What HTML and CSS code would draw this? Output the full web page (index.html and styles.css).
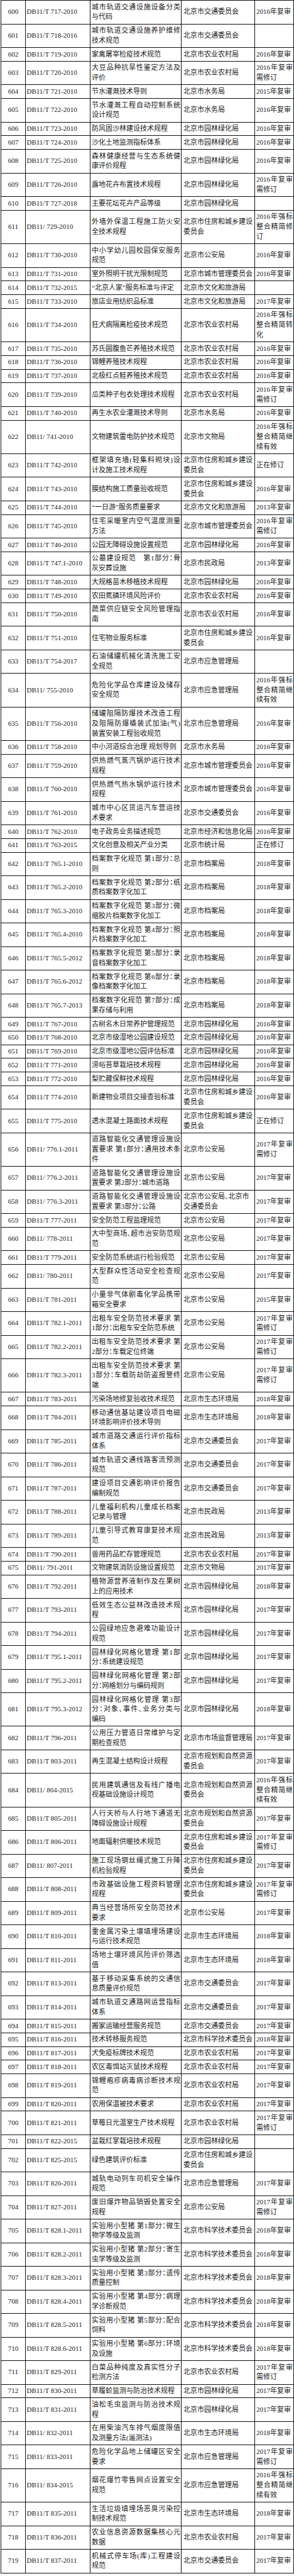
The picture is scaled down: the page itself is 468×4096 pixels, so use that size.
FILE: index.html
```html
<!DOCTYPE html>
<html lang="zh-CN">
<head>
<meta charset="utf-8">
<title>北京市地方标准复审情况表</title>
<link rel="stylesheet" href="styles.css">
</head>
<body>
<table class="std">
<colgroup><col class="c-no"><col class="c-code"><col class="c-name"><col class="c-dept"><col class="c-st"></colgroup>
<tbody>
<tr><td class="no">600</td><td class="code">DB11/T 717-2010</td><td class="name"><span class="j">城市轨道交通设施设备分类</span>与代码</td><td class="dept">北京市交通委员会</td><td class="st">2016年复审</td></tr>
<tr><td class="no">601</td><td class="code">DB11/T 718-2016</td><td class="name"><span class="j">城市轨道交通设施养护维修</span>技术规范</td><td class="dept">北京市交通委员会</td><td class="st"></td></tr>
<tr><td class="no">602</td><td class="code">DB11/T 719-2010</td><td class="name">家禽屠宰检疫技术规范</td><td class="dept">北京市农业农村局</td><td class="st">2016年复审</td></tr>
<tr><td class="no">603</td><td class="code">DB11/T 720-2010</td><td class="name"><span class="j">大豆品种抗旱性鉴定方法及</span>评价</td><td class="dept">北京市农业农村局</td><td class="st">2016年复审需修订</td></tr>
<tr><td class="no">604</td><td class="code">DB11/T 721-2010</td><td class="name">节水灌溉技术导则</td><td class="dept">北京市水务局</td><td class="st">2015年复审</td></tr>
<tr><td class="no">605</td><td class="code">DB11/T 722-2010</td><td class="name"><span class="j">节水灌溉工程自动控制系统</span>设计规范</td><td class="dept">北京市水务局</td><td class="st">2016年复审</td></tr>
<tr><td class="no">606</td><td class="code">DB11/T 723-2010</td><td class="name">防风固沙林建设技术规程</td><td class="dept">北京市园林绿化局</td><td class="st">2016年复审</td></tr>
<tr><td class="no">607</td><td class="code">DB11/T 724-2010</td><td class="name">沙化土地监测指标体系</td><td class="dept">北京市园林绿化局</td><td class="st">2016年复审</td></tr>
<tr><td class="no">608</td><td class="code">DB11/T 725-2010</td><td class="name"><span class="j">森林健康经营与生态系统健</span>康评价规程</td><td class="dept">北京市园林绿化局</td><td class="st">2016年复审</td></tr>
<tr><td class="no">609</td><td class="code">DB11/T 726-2010</td><td class="name">露地花卉布置技术规程</td><td class="dept">北京市园林绿化局</td><td class="st">2016年复审需修订</td></tr>
<tr><td class="no">610</td><td class="code">DB11/T 727-2018</td><td class="name">主要花坛花卉产品等级</td><td class="dept">北京市园林绿化局</td><td class="st"></td></tr>
<tr><td class="no">611</td><td class="code">DB11/ 729-2010</td><td class="name"><span class="j">外墙外保温工程施工防火安</span>全技术规程</td><td class="dept">北京市住房和城乡建设委员会</td><td class="st">2016年强标整合精简修订</td></tr>
<tr><td class="no">612</td><td class="code">DB11/T 730-2010</td><td class="name"><span class="j">中小学幼儿园校园保安服务</span>规范</td><td class="dept">北京市公安局</td><td class="st">2016年复审</td></tr>
<tr><td class="no">613</td><td class="code">DB11/T 731-2010</td><td class="name">室外照明干扰光限制规范</td><td class="dept">北京市城市管理委员会</td><td class="st">2016年复审</td></tr>
<tr><td class="no">614</td><td class="code">DB11/T 732-2015</td><td class="name">“北京人家”服务标准与评定</td><td class="dept">北京市文化和旅游局</td><td class="st"></td></tr>
<tr><td class="no">615</td><td class="code">DB11/T 733-2010</td><td class="name">旅店业用纺织品标准</td><td class="dept">北京市文化和旅游局</td><td class="st">2017年复审</td></tr>
<tr><td class="no">616</td><td class="code">DB11/T 734-2010</td><td class="name">狂犬病隔离检疫技术规范</td><td class="dept">北京市农业农村局</td><td class="st">2016年强标整合精简转化</td></tr>
<tr><td class="no">617</td><td class="code">DB11/T 735-2010</td><td class="name">苏氏圆腹鱼芒养殖技术规范</td><td class="dept">北京市农业农村局</td><td class="st">2016年复审</td></tr>
<tr><td class="no">618</td><td class="code">DB11/T 736-2010</td><td class="name">锦鲤养殖技术规程</td><td class="dept">北京市农业农村局</td><td class="st">2016年复审</td></tr>
<tr><td class="no">619</td><td class="code">DB11/T 737-2010</td><td class="name">北极红点鲑养殖技术规范</td><td class="dept">北京市农业农村局</td><td class="st">2016年复审</td></tr>
<tr><td class="no">620</td><td class="code">DB11/T 739-2010</td><td class="name">瓜类种子包衣处理技术规程</td><td class="dept">北京市农业农村局</td><td class="st">2016年复审需修订</td></tr>
<tr><td class="no">621</td><td class="code">DB11/T 740-2010</td><td class="name">再生水农业灌溉技术导则</td><td class="dept">北京市水务局</td><td class="st">2016年复审</td></tr>
<tr><td class="no">622</td><td class="code">DB11/ 741-2010</td><td class="name">文物建筑雷电防护技术规范</td><td class="dept">北京市文物局</td><td class="st">2016年强标整合精简继续有效</td></tr>
<tr><td class="no">623</td><td class="code">DB11/T 742-2010</td><td class="name"><span class="j">框架填充墙(轻集料砌块)设</span>计及施工技术规程</td><td class="dept">北京市住房和城乡建设委员会</td><td class="st">正在修订</td></tr>
<tr><td class="no">624</td><td class="code">DB11/T 743-2010</td><td class="name">膜结构施工质量验收规范</td><td class="dept">北京市住房和城乡建设委员会</td><td class="st">2016年复审</td></tr>
<tr><td class="no">625</td><td class="code">DB11/T 744-2010</td><td class="name">“一日游”服务质量要求</td><td class="dept">北京市文化和旅游局</td><td class="st">2013年复审</td></tr>
<tr><td class="no">626</td><td class="code">DB11/T 745-2010</td><td class="name"><span class="j">住宅采暖室内空气温度测量</span>方法</td><td class="dept">北京市城市管理委员会</td><td class="st">2016年复审需修订</td></tr>
<tr><td class="no">627</td><td class="code">DB11/T 746-2010</td><td class="name">公园无障碍设施设置规范</td><td class="dept">北京市园林绿化局</td><td class="st">2016年复审</td></tr>
<tr><td class="no">628</td><td class="code">DB11/T 747.1-2010</td><td class="name"><span class="j">公墓建设规范　第1部分：骨</span>灰安葬设施</td><td class="dept">北京市民政局</td><td class="st">2013年复审</td></tr>
<tr><td class="no">629</td><td class="code">DB11/T 748-2010</td><td class="name">大规格苗木移植技术规程</td><td class="dept">北京市园林绿化局</td><td class="st">2016年复审</td></tr>
<tr><td class="no">630</td><td class="code">DB11/T 749-2010</td><td class="name">农田氮磷环境风险评价</td><td class="dept">北京市农业农村局</td><td class="st">2016年复审</td></tr>
<tr><td class="no">631</td><td class="code">DB11/T 750-2010</td><td class="name"><span class="j">蔬菜供应链安全风险管理指</span>南</td><td class="dept">北京市农业农村局</td><td class="st">2016年复审</td></tr>
<tr><td class="no">632</td><td class="code">DB11/T 751-2010</td><td class="name">住宅物业服务标准</td><td class="dept">北京市住房和城乡建设委员会</td><td class="st">2016年复审</td></tr>
<tr><td class="no">633</td><td class="code">DB11/T 754-2017</td><td class="name"><span class="j">石油储罐机械化清洗施工安</span>全规范</td><td class="dept">北京市应急管理局</td><td class="st"></td></tr>
<tr><td class="no">634</td><td class="code">DB11/ 755-2010</td><td class="name"><span class="j">危险化学品仓库建设及储存</span>安全规范</td><td class="dept">北京市应急管理局</td><td class="st">2016年强标整合精简继续有效</td></tr>
<tr><td class="no">635</td><td class="code">DB11/T 756-2010</td><td class="name"><span class="j">储罐阻隔防爆技术改造工程</span><span class="j">及阻隔防爆橇装式加油(气)</span>装置安装工程验收规范</td><td class="dept">北京市应急管理局</td><td class="st">2016年复审</td></tr>
<tr><td class="no">636</td><td class="code">DB11/T 758-2010</td><td class="name">中小河道综合治理 规划导则</td><td class="dept">北京市水务局</td><td class="st">2016年复审</td></tr>
<tr><td class="no">637</td><td class="code">DB11/T 759-2010</td><td class="name"><span class="j">供热燃气蒸汽锅炉运行技术</span>规程</td><td class="dept">北京市城市管理委员会</td><td class="st">2016年复审</td></tr>
<tr><td class="no">638</td><td class="code">DB11/T 760-2010</td><td class="name"><span class="j">供热燃气热水锅炉运行技术</span>规程</td><td class="dept">北京市城市管理委员会</td><td class="st">2016年复审</td></tr>
<tr><td class="no">639</td><td class="code">DB11/T 761-2010</td><td class="name"><span class="j">城市中心区货运汽车营运技</span>术要求</td><td class="dept">北京市交通委员会</td><td class="st">2016年复审</td></tr>
<tr><td class="no">640</td><td class="code">DB11/T 762-2010</td><td class="name">电子政务业务描述规范</td><td class="dept">北京市经济和信息化局</td><td class="st">2016年复审</td></tr>
<tr><td class="no">641</td><td class="code">DB11/T 763-2015</td><td class="name">文化创意及相关产业分类</td><td class="dept">北京市统计局</td><td class="st">正在修订</td></tr>
<tr><td class="no">642</td><td class="code">DB11/T 765.1-2010</td><td class="name"><span class="j">档案数字化规范 第1部分：总</span>则</td><td class="dept">北京市档案局</td><td class="st">2018年复审</td></tr>
<tr><td class="no">643</td><td class="code">DB11/T 765.2-2010</td><td class="name"><span class="j">档案数字化规范 第2部分：纸</span>质档案数字化加工</td><td class="dept">北京市档案局</td><td class="st">2018年复审</td></tr>
<tr><td class="no">644</td><td class="code">DB11/T 765.3-2010</td><td class="name"><span class="j">档案数字化规范 第3部分：微</span>缩胶片档案数字化加工</td><td class="dept">北京市档案局</td><td class="st">2018年复审</td></tr>
<tr><td class="no">645</td><td class="code">DB11/T 765.4-2010</td><td class="name"><span class="j">档案数字化规范 第4部分：照</span>片档案数字化加工</td><td class="dept">北京市档案局</td><td class="st">2018年复审</td></tr>
<tr><td class="no">646</td><td class="code">DB11/T 765.5-2012</td><td class="name"><span class="j">档案数字化规范 第5部分：录</span>音档案数字化加工</td><td class="dept">北京市档案局</td><td class="st">2018年复审</td></tr>
<tr><td class="no">647</td><td class="code">DB11/T 765.6-2012</td><td class="name"><span class="j">档案数字化规范 第6部分：录</span>像档案数字化加工</td><td class="dept">北京市档案局</td><td class="st">2018年复审</td></tr>
<tr><td class="no">648</td><td class="code">DB11/T 765.7-2013</td><td class="name"><span class="j">档案数字化规范 第7部分：成</span>果存储与利用</td><td class="dept">北京市档案局</td><td class="st">2018年复审</td></tr>
<tr><td class="no">649</td><td class="code">DB11/T 767-2010</td><td class="name">古树名木日常养护管理规范</td><td class="dept">北京市园林绿化局</td><td class="st">2016年复审</td></tr>
<tr><td class="no">650</td><td class="code">DB11/T 768-2010</td><td class="name">北京市级湿地公园建设规范</td><td class="dept">北京市园林绿化局</td><td class="st">2016年复审</td></tr>
<tr><td class="no">651</td><td class="code">DB11/T 769-2010</td><td class="name">北京市级湿地公园评估标准</td><td class="dept">北京市园林绿化局</td><td class="st">2016年复审</td></tr>
<tr><td class="no">652</td><td class="code">DB11/T 771-2010</td><td class="name">涝峪苔草栽培技术规程</td><td class="dept">北京市园林绿化局</td><td class="st">2016年复审</td></tr>
<tr><td class="no">653</td><td class="code">DB11/T 772-2010</td><td class="name">梨贮藏保鲜技术规程</td><td class="dept">北京市园林绿化局</td><td class="st">2016年复审</td></tr>
<tr><td class="no">654</td><td class="code">DB11/T 774-2010</td><td class="name">新建物业项目交接查验标准</td><td class="dept">北京市住房和城乡建设委员会</td><td class="st">2016年复审</td></tr>
<tr><td class="no">655</td><td class="code">DB11/T 775-2010</td><td class="name">透水混凝土路面技术规程</td><td class="dept">北京市住房和城乡建设委员会</td><td class="st">正在修订</td></tr>
<tr><td class="no">656</td><td class="code">DB11/ 776.1-2011</td><td class="name"><span class="j">道路智能化交通管理设施设</span><span class="j">置要求 第1部分：通用技术条</span>件</td><td class="dept">北京市公安局</td><td class="st">2017年复审需修订</td></tr>
<tr><td class="no">657</td><td class="code">DB11/ 776.2-2011</td><td class="name"><span class="j">道路智能化交通管理设施设</span>置要求 第2部分：城市道路</td><td class="dept">北京市公安局</td><td class="st">2017年复审</td></tr>
<tr><td class="no">658</td><td class="code">DB11/ 776.3-2011</td><td class="name"><span class="j">道路智能化交通管理设施设</span>置要求 第3部分：公路</td><td class="dept">北京市公安局、北京市交通委员会</td><td class="st">2017年复审</td></tr>
<tr><td class="no">659</td><td class="code">DB11/T 777-2011</td><td class="name">安全防范工程监理规范</td><td class="dept">北京市公安局</td><td class="st">2017年复审</td></tr>
<tr><td class="no">660</td><td class="code">DB11/ 778-2011</td><td class="name"><span class="j">大中型商场、超市治安防范规</span>范</td><td class="dept">北京市公安局</td><td class="st">2017年复审</td></tr>
<tr><td class="no">661</td><td class="code">DB11/T 779-2011</td><td class="name">安全防范系统运行检验规范</td><td class="dept">北京市公安局</td><td class="st">2017年复审</td></tr>
<tr><td class="no">662</td><td class="code">DB11/ 780-2011</td><td class="name"><span class="j">大型群众性活动安全检查规</span>范</td><td class="dept">北京市公安局</td><td class="st">2017年复审</td></tr>
<tr><td class="no">663</td><td class="code">DB11/T 781-2011</td><td class="name"><span class="j">小量非气体剧毒化学品携带</span>箱安全要求</td><td class="dept">北京市公安局</td><td class="st">2015年复审</td></tr>
<tr><td class="no">664</td><td class="code">DB11/T 782.1-2011</td><td class="name"><span class="j">出租车安全防范技术要求 第</span>1部分：出租车安全防范系统</td><td class="dept">北京市公安局</td><td class="st">2017年复审需修订</td></tr>
<tr><td class="no">665</td><td class="code">DB11/T 782.2-2011</td><td class="name"><span class="j">出租车安全防范技术要求 第</span>2部分：车载定位终端</td><td class="dept">北京市公安局</td><td class="st">2017年复审需修订</td></tr>
<tr><td class="no">666</td><td class="code">DB11/T 782.3-2011</td><td class="name"><span class="j">出租车安全防范技术要求 第</span><span class="j">3部分：车载防劫防盗报警终</span>端</td><td class="dept">北京市公安局</td><td class="st">2017年复审需修订</td></tr>
<tr><td class="no">667</td><td class="code">DB11/T 783-2011</td><td class="name">污染场地修复验收技术规范</td><td class="dept">北京市生态环境局</td><td class="st">2018年复审</td></tr>
<tr><td class="no">668</td><td class="code">DB11/T 784-2011</td><td class="name"><span class="j">移动通信基站建设项目电磁</span>环境影响评价技术导则</td><td class="dept">北京市生态环境局</td><td class="st">2018年复审</td></tr>
<tr><td class="no">669</td><td class="code">DB11/T 785-2011</td><td class="name"><span class="j">城市道路交通运行评价指标</span>体系</td><td class="dept">北京市交通委员会</td><td class="st">2017年复审</td></tr>
<tr><td class="no">670</td><td class="code">DB11/T 786-2011</td><td class="name"><span class="j">城市轨道交通线路客流预测</span>规范</td><td class="dept">北京市交通委员会</td><td class="st">2017年复审</td></tr>
<tr><td class="no">671</td><td class="code">DB11/T 787-2011</td><td class="name"><span class="j">建设项目交通影响评价报告</span>编制规范</td><td class="dept">北京市交通委员会</td><td class="st">2017年复审</td></tr>
<tr><td class="no">672</td><td class="code">DB11/T 788-2011</td><td class="name"><span class="j">儿童福利机构儿童成长档案</span>记录与管理</td><td class="dept">北京市民政局</td><td class="st">2013年复审</td></tr>
<tr><td class="no">673</td><td class="code">DB11/T 789-2011</td><td class="name"><span class="j">儿童引导式教育康复技术规</span>范</td><td class="dept">北京市民政局</td><td class="st">2013年复审</td></tr>
<tr><td class="no">674</td><td class="code">DB11/T 790-2011</td><td class="name">兽用药品贮存管理规范</td><td class="dept">北京市农业农村局</td><td class="st">2017年复审</td></tr>
<tr><td class="no">675</td><td class="code">DB11/ 791-2011</td><td class="name">文物建筑消防设施设置规范</td><td class="dept">北京市文物局</td><td class="st">2017年复审</td></tr>
<tr><td class="no">676</td><td class="code">DB11/T 792-2011</td><td class="name"><span class="j">植物源营养液制作及在果树</span>上的应用技术</td><td class="dept">北京市园林绿化局</td><td class="st">2018年复审</td></tr>
<tr><td class="no">677</td><td class="code">DB11/T 793-2011</td><td class="name"><span class="j">低效生态公益林改造技术规</span>程</td><td class="dept">北京市园林绿化局</td><td class="st">2017年复审</td></tr>
<tr><td class="no">678</td><td class="code">DB11/T 794-2011</td><td class="name"><span class="j">公园绿地应急避难功能设计</span>规范</td><td class="dept">北京市园林绿化局</td><td class="st">2017年复审</td></tr>
<tr><td class="no">679</td><td class="code">DB11/T 795.1-2011</td><td class="name"><span class="j">园林绿化网格化管理 第1部</span>分：系统建设规范</td><td class="dept">北京市园林绿化局</td><td class="st">2017年复审</td></tr>
<tr><td class="no">680</td><td class="code">DB11/T 795.2-2011</td><td class="name"><span class="j">园林绿化网格化管理 第2部</span>分：网格划分与编码规则</td><td class="dept">北京市园林绿化局</td><td class="st">2017年复审</td></tr>
<tr><td class="no">681</td><td class="code">DB11/T 795.3-2012</td><td class="name"><span class="j">园林绿化网格化管理 第3部</span><span class="j">分：对象、事件、业务分类与</span>编码</td><td class="dept">北京市园林绿化局</td><td class="st">2018年复审</td></tr>
<tr><td class="no">682</td><td class="code">DB11/T 796-2011</td><td class="name"><span class="j">公用压力管道日常维护与定</span>期检查规范</td><td class="dept">北京市市场监督管理局</td><td class="st">2017年复审</td></tr>
<tr><td class="no">683</td><td class="code">DB11/T 803-2011</td><td class="name">再生混凝土结构设计规程</td><td class="dept">北京市规划和自然资源委员会</td><td class="st">2017年复审</td></tr>
<tr><td class="no">684</td><td class="code">DB11/ 804-2015</td><td class="name"><span class="j">民用建筑通信及有线广播电</span>视基础设施设计规范</td><td class="dept">北京市规划和自然资源委员会</td><td class="st">2016年强标整合精简继续有效</td></tr>
<tr><td class="no">685</td><td class="code">DB11/T 805-2011</td><td class="name"><span class="j">人行天桥与人行地下通道无</span>障碍设施设计规程</td><td class="dept">北京市规划和自然资源委员会</td><td class="st">2017年复审</td></tr>
<tr><td class="no">686</td><td class="code">DB11/T 806-2011</td><td class="name">地面辐射供暖技术规范</td><td class="dept">北京市住房和城乡建设委员会</td><td class="st">2017年复审需修订</td></tr>
<tr><td class="no">687</td><td class="code">DB11/ 807-2011</td><td class="name"><span class="j">施工现场钢丝绳式施工升降</span>机检验规程</td><td class="dept">北京市住房和城乡建设委员会</td><td class="st">2017年复审</td></tr>
<tr><td class="no">688</td><td class="code">DB11/T 808-2011</td><td class="name"><span class="j">市政基础设施工程资料管理</span>规程</td><td class="dept">北京市住房和城乡建设委员会</td><td class="st">2017年复审需修订</td></tr>
<tr><td class="no">689</td><td class="code">DB11/T 809-2011</td><td class="name"><span class="j">典当经营场所安全防范技术</span>要求</td><td class="dept">北京市公安局</td><td class="st">2017年复审</td></tr>
<tr><td class="no">690</td><td class="code">DB11/T 810-2011</td><td class="name"><span class="j">重金属污染土壤填埋场建设</span>与运行技术规范</td><td class="dept">北京市生态环境局</td><td class="st">2018年复审</td></tr>
<tr><td class="no">691</td><td class="code">DB11/T 811-2011</td><td class="name"><span class="j">场地土壤环境风险评价筛选</span>值</td><td class="dept">北京市生态环境局</td><td class="st">2018年复审</td></tr>
<tr><td class="no">692</td><td class="code">DB11/T 813-2011</td><td class="name"><span class="j">基于移动采集系统的交通信</span>息质量评价规范</td><td class="dept">北京市交通委员会</td><td class="st">2017年复审</td></tr>
<tr><td class="no">693</td><td class="code">DB11/T 814-2011</td><td class="name"><span class="j">城市轨道交通路网运营指标</span>体系</td><td class="dept">北京市交通委员会</td><td class="st">2017年复审</td></tr>
<tr><td class="no">694</td><td class="code">DB11/T 815-2011</td><td class="name">搬家运输经营服务规范</td><td class="dept">北京市交通委员会</td><td class="st">2017年复审</td></tr>
<tr><td class="no">695</td><td class="code">DB11/T 816-2011</td><td class="name">技术转移服务规范</td><td class="dept">北京市科学技术委员会</td><td class="st">2018年复审</td></tr>
<tr><td class="no">696</td><td class="code">DB11/T 817-2011</td><td class="name">犬免疫标牌技术规范</td><td class="dept">北京市农业农村局</td><td class="st">2017年复审</td></tr>
<tr><td class="no">697</td><td class="code">DB11/T 818-2011</td><td class="name">农区毒饵站灭鼠技术规程</td><td class="dept">北京市农业农村局</td><td class="st">2017年复审</td></tr>
<tr><td class="no">698</td><td class="code">DB11/T 819-2011</td><td class="name"><span class="j">锦鲤疱疹病毒病诊断技术规</span>范</td><td class="dept">北京市农业农村局</td><td class="st">2017年复审</td></tr>
<tr><td class="no">699</td><td class="code">DB11/T 820-2011</td><td class="name">农用保温被技术要求</td><td class="dept">北京市农业农村局</td><td class="st">2017年复审</td></tr>
<tr><td class="no">700</td><td class="code">DB11/T 821-2011</td><td class="name">草莓日光温室生产技术规程</td><td class="dept">北京市农业农村局</td><td class="st">2017年复审需修订</td></tr>
<tr><td class="no">701</td><td class="code">DB11/T 822-2015</td><td class="name">盆栽红掌栽培技术规程</td><td class="dept">北京市园林绿化局</td><td class="st"></td></tr>
<tr><td class="no">702</td><td class="code">DB11/T 825-2015</td><td class="name">绿色建筑评价标准</td><td class="dept">北京市住房和城乡建设委员会</td><td class="st"></td></tr>
<tr><td class="no">703</td><td class="code">DB11/T 826-2011</td><td class="name"><span class="j">城轨电动列车司机安全操作</span>规范</td><td class="dept">北京市应急管理局</td><td class="st">2017年复审</td></tr>
<tr><td class="no">704</td><td class="code">DB11/T 827-2011</td><td class="name"><span class="j">废旧爆炸物品销毁处置安全</span>规程</td><td class="dept">北京市公安局</td><td class="st">2017年复审需修订</td></tr>
<tr><td class="no">705</td><td class="code">DB11/T 828.1-2011</td><td class="name"><span class="j">实验用小型猪 第1部分：微生</span>物学等级及监测</td><td class="dept">北京市科学技术委员会</td><td class="st">2018年复审</td></tr>
<tr><td class="no">706</td><td class="code">DB11/T 828.2-2011</td><td class="name"><span class="j">实验用小型猪 第2部分：寄生</span>虫学等级及监测</td><td class="dept">北京市科学技术委员会</td><td class="st">2018年复审</td></tr>
<tr><td class="no">707</td><td class="code">DB11/T 828.3-2011</td><td class="name"><span class="j">实验用小型猪 第3部分：遗传</span>质量控制</td><td class="dept">北京市科学技术委员会</td><td class="st">2018年复审</td></tr>
<tr><td class="no">708</td><td class="code">DB11/T 828.4-2011</td><td class="name"><span class="j">实验用小型猪 第4部分：病理</span>学诊断规范</td><td class="dept">北京市科学技术委员会</td><td class="st">2018年复审</td></tr>
<tr><td class="no">709</td><td class="code">DB11/T 828.5-2011</td><td class="name"><span class="j">实验用小型猪 第5部分：配合</span>饲料</td><td class="dept">北京市科学技术委员会</td><td class="st">2018年复审</td></tr>
<tr><td class="no">710</td><td class="code">DB11/T 828.6-2011</td><td class="name"><span class="j">实验用小型猪 第6部分：环境</span>及设施</td><td class="dept">北京市科学技术委员会</td><td class="st">2018年复审</td></tr>
<tr><td class="no">711</td><td class="code">DB11/T 829-2011</td><td class="name"><span class="j">白菜品种纯度及真实性分子</span>检测方法</td><td class="dept">北京市农业农村局</td><td class="st">2017年复审需修订</td></tr>
<tr><td class="no">712</td><td class="code">DB11/T 830-2011</td><td class="name">草履蚧监测与防治技术规程</td><td class="dept">北京市园林绿化局</td><td class="st">2017年复审</td></tr>
<tr><td class="no">713</td><td class="code">DB11/T 831-2011</td><td class="name"><span class="j">油松毛虫监测与防治技术规</span>程</td><td class="dept">北京市园林绿化局</td><td class="st">2017年复审</td></tr>
<tr><td class="no">714</td><td class="code">DB11/ 832-2011</td><td class="name"><span class="j">在用柴油汽车排气烟度限值</span>及测量方法(遥测法)</td><td class="dept">北京市生态环境局</td><td class="st">2018年复审</td></tr>
<tr><td class="no">715</td><td class="code">DB11/ 833-2011</td><td class="name"><span class="j">危险化学品地上储罐区安全</span>要求</td><td class="dept">北京市应急管理局</td><td class="st">2017年复审需修订</td></tr>
<tr><td class="no">716</td><td class="code">DB11/ 834-2015</td><td class="name"><span class="j">烟花爆竹零售网点设置安全</span>规范</td><td class="dept">北京市应急管理局</td><td class="st">2016年强标整合精简继续有效</td></tr>
<tr><td class="no">717</td><td class="code">DB11/T 835-2011</td><td class="name"><span class="j">生活垃圾填埋场恶臭污染控</span>制技术规范</td><td class="dept">北京市生态环境局</td><td class="st">2018年复审</td></tr>
<tr><td class="no">718</td><td class="code">DB11/T 836-2011</td><td class="name"><span class="j">农业信息资源数据集核心元</span>数据</td><td class="dept">北京市农业农村局</td><td class="st">2017年复审</td></tr>
<tr><td class="no">719</td><td class="code">DB11/T 837-2011</td><td class="name"><span class="j">机械式停车场(库)工程建设</span>规范</td><td class="dept">北京市交通委员会</td><td class="st">2017年复审</td></tr>
</tbody>
</table>
</body>
</html>
```
FILE: styles.css
```css
html, body {
  margin: 0;
  padding: 0;
  background: #ffffff;
}

body {
  font-family: "Liberation Serif", "Noto Sans CJK SC", serif;
  font-size: 11px;
  line-height: 15.75px;
  color: #1a1a1a;
}

.std {
  border-collapse: collapse;
  table-layout: fixed;
  width: 466px;
  margin: 0 0 0 1px;
}

.c-no { width: 39px; }
.c-code { width: 103px; }
.c-name { width: 145px; }
.c-dept { width: 117px; }
.c-st { width: 62px; }

.std td {
  border: 1px solid #111111;
  padding: 2.5px 1px 2.5px 2px;
  vertical-align: middle;
  font-feature-settings: "halt";
  overflow: hidden;
}

.std td.no {
  text-align: center;
  padding-left: 1px;
}

.std td.code {
  padding-left: 1.5px;
  white-space: nowrap;
}

.std td.name {
  padding-left: 2px;
  text-align: left;
}

.name .j {
  display: block;
  text-align: justify;
  text-align-last: justify;
}

.std td.dept {
  padding-left: 3px;
  text-align: left;
}

.std td.st {
  padding-left: 2px;
  text-align: justify;
}
```
